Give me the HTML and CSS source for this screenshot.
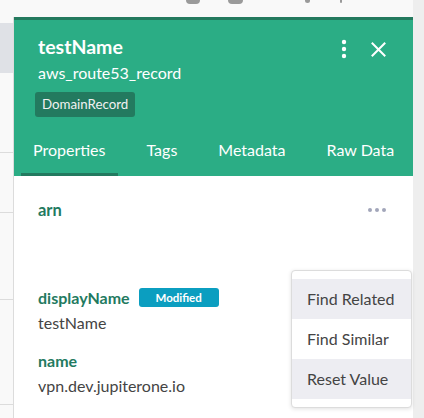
FILE: index.html
```html
<!DOCTYPE html>
<html>
<head>
<meta charset="utf-8">
<link rel="stylesheet" href="styles.css">
</head>
<body>
<div class="app">
  <div class="topbar">
    <span class="stub stub-a"></span>
    <span class="stub stub-b"></span>
    <span class="stub stub-c"></span>
    <span class="stub stub-d"></span>
  </div>
  <div class="scrollstrip"></div>
  <div class="sidebar">
    <div class="side-head"></div>
    <div class="side-row r1"></div>
    <div class="side-row r2"></div>
    <div class="side-row r3"></div>
    <div class="side-row r4"></div>
  </div>
  <div class="panel">
    <div class="panel-header">
      <div class="title-row">
        <div class="titles">
          <div class="title">testName</div>
          <div class="subtitle">aws_route53_record</div>
        </div>
        <div class="actions">
          <svg class="kebab" width="6" height="20" viewBox="0 0 6 20"><circle cx="3" cy="3" r="2.2" fill="#fff"/><circle cx="3" cy="10" r="2.2" fill="#fff"/><circle cx="3" cy="17" r="2.2" fill="#fff"/></svg>
          <svg class="close" width="15" height="15" viewBox="0 0 15 15"><path d="M1.5 1.5 L13.5 13.5 M13.5 1.5 L1.5 13.5" stroke="#fff" stroke-width="2" stroke-linecap="square"/></svg>
        </div>
      </div>
      <div class="class-badge">DomainRecord</div>
      <div class="tabs">
        <div class="tab active">Properties</div>
        <div class="tab">Tags</div>
        <div class="tab">Metadata</div>
        <div class="tab">Raw Data</div>
      </div>
    </div>
    <div class="panel-body">
      <div class="prop prop-arn">
        <div class="prop-head">
          <span class="label">arn</span>
          <span class="more"><i></i><i></i><i></i></span>
        </div>
        <div class="value empty"></div>
      </div>
      <div class="prop">
        <div class="prop-head">
          <span class="label">displayName</span>
          <span class="modified">Modified</span>
        </div>
        <div class="value">testName</div>
      </div>
      <div class="prop">
        <div class="prop-head">
          <span class="label">name</span>
        </div>
        <div class="value">vpn.dev.jupiterone.io</div>
      </div>
      <div class="menu">
        <div class="menu-item hl">Find Related</div>
        <div class="menu-item">Find Similar</div>
        <div class="menu-item hl">Reset Value</div>
      </div>
    </div>
  </div>
</div>
</body>
</html>
```
FILE: styles.css
```css
* { box-sizing: border-box; }
html, body { margin: 0; padding: 0; }
body {
  width: 424px;
  height: 418px;
  overflow: hidden;
  background: #fff;
  font-family: Lato, "Open Sans", sans-serif;
}
.app {
  display: grid;
  grid-template-columns: 14px 399px 11px;
  grid-template-rows: 17px 401px;
  height: 418px;
}
.topbar {
  grid-column: 1 / 3;
  grid-row: 1;
  background: #f9f9f9;
  display: flex;
  align-items: flex-start;
}
.stub {
  display: block;
  height: 4px;
  background: #9a9a9a;
  border-radius: 0 0 5px 5px;
}
.stub-a { width: 14px; margin-left: 186px; }
.stub-b { width: 15px; margin-left: 28px; }
.stub-c { width: 5px; height: 3px; margin-left: 62px; }
.stub-d { width: 2px; height: 3px; margin-left: 30px; }
.scrollstrip {
  grid-column: 3;
  grid-row: 1 / 3;
  background: #eeeeee;
}
.sidebar {
  grid-column: 1;
  grid-row: 2;
  background: #f9f9f9;
  border-right: 1px solid #dcdcdc;
  display: flex;
  flex-direction: column;
}
.side-head {
  margin-top: 6px;
  height: 50px;
  background: #dfe1e6;
}
.side-row { border-top: 1px solid #dcdcdc; }
.r1 { margin-top: 79px; }
.r2 { margin-top: 59px; }
.r3 { margin-top: 86px; }
.r4 { margin-top: 104px; }
.panel {
  grid-column: 2;
  grid-row: 2;
  display: flex;
  flex-direction: column;
  background: #fff;
  border-top: 3px solid #247a5e;
}
.panel-header {
  background: #2bad85;
  color: #fff;
  padding: 16px 0 0 24px;
}
.title-row {
  display: flex;
  justify-content: space-between;
  align-items: flex-start;
}
.title {
  font-size: 19.5px;
  font-weight: 700;
  line-height: 22px;
}
.subtitle {
  font-size: 16px;
  line-height: 20px;
  margin-top: 5px;
}
.actions {
  display: flex;
  align-items: center;
  gap: 24px;
  padding: 3px 27px 0 0;
}
.kebab { display: block; }
.close { display: block; }
.class-badge {
  display: inline-block;
  margin: 9px 0 0 -3px;
  background: #237a5f;
  color: #f1f1f1;
  font-size: 13.3px;
  line-height: 25px;
  height: 25px;
  padding: 0 7px;
  border-radius: 3px;
}
.tabs {
  display: flex;
  gap: 17px;
  margin: 10px 0 0 -17px;
}
.tab {
  font-size: 16px;
  line-height: 18px;
  padding: 14px 12px 14px;
  border-bottom: 3px solid transparent;
}
.tab.active { border-bottom-color: #237a5f; border-radius: 2px 2px 0 0; }
.panel-body {
  position: relative;
  flex: 1;
  padding: 23px 27px 0 24px;
}
.prop-head {
  display: flex;
  align-items: center;
  height: 22px;
}
.label {
  font-size: 16px;
  font-weight: 700;
  color: #237a5f;
}
.prop-arn .label { font-size: 16.5px; }
.more {
  margin-left: auto;
  display: flex;
  gap: 3px;
}
.more i {
  display: block;
  width: 4px;
  height: 4px;
  border-radius: 50%;
  background: #a2a6ba;
}
.value {
  font-size: 16px;
  line-height: 22px;
  color: #444;
  margin-top: 4px;
}
.value.empty { height: 46px; }
.prop { margin-bottom: 15px; }
.prop-arn { margin-bottom: 15px; }
.modified {
  margin-left: 9px;
  background: #0b9ec0;
  color: #fff;
  font-size: 11.5px;
  font-weight: 700;
  height: 19px;
  line-height: 19px;
  width: 80px;
  text-align: center;
  border-radius: 3px;
}
.menu {
  position: absolute;
  top: 94px;
  right: 1px;
  width: 121px;
  padding: 8px 0;
  background: #fff;
  border: 1px solid #dcdcdc;
  border-radius: 4px;
  box-shadow: 0 1px 4px rgba(0,0,0,0.12);
}
.menu-item {
  height: 40px;
  line-height: 40px;
  padding-left: 15px;
  font-size: 16px;
  color: #444;
}
.menu-item.hl { background: #ededf2; }
```
